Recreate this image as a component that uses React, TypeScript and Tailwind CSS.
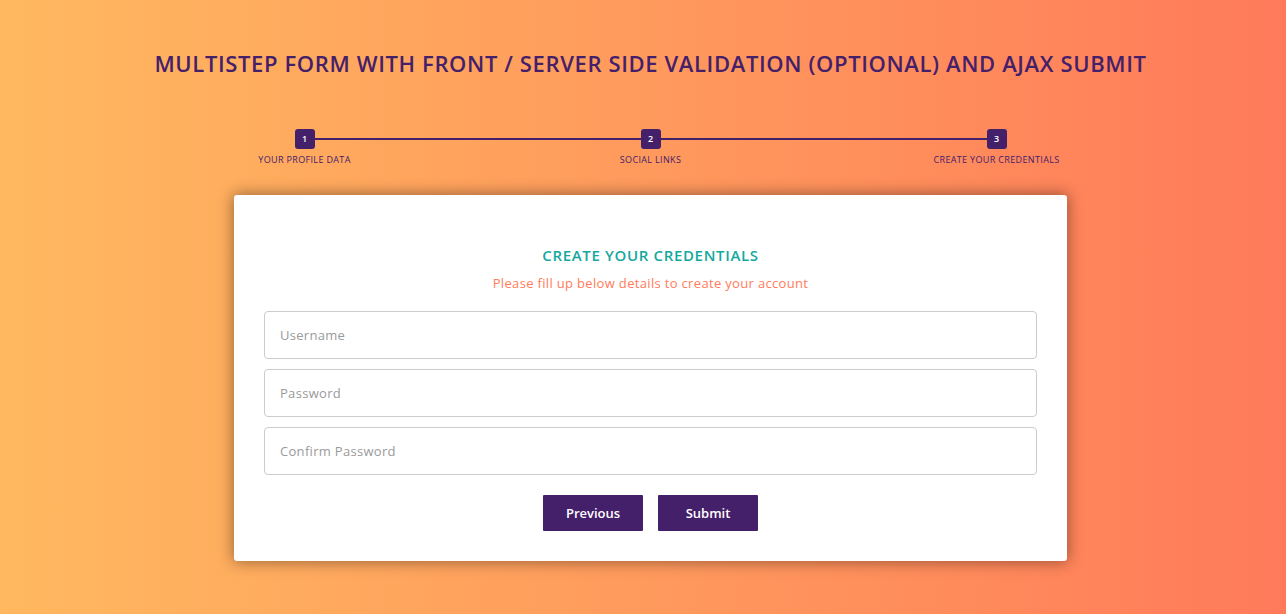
import React from "react";

const font = { fontFamily: '"Open Sans", "Noto Sans", sans-serif' };

function Step({ n, label }: { n: number; label: string }) {
  return (
    <div className="flex w-[346px] flex-col items-center">
      <div className="relative z-10 flex h-[20px] w-[20px] items-center justify-center rounded-[3px] bg-[#45206a] text-[9px] font-semibold text-white">
        {n}
      </div>
      <div className="mt-[5px] text-[9px] leading-[12px] tracking-[0.35px] text-[#45206a]">{label}</div>
    </div>
  );
}

function Field({ placeholder }: { placeholder: string }) {
  return (
    <input
      placeholder={placeholder}
      className="h-[48px] w-full rounded-[4px] border border-[#cccccc] bg-white px-[15px] text-[13px] tracking-[0.3px] text-[#555] outline-none placeholder:text-[#9a9a9a]"
      style={font}
    />
  );
}

export default function App() {
  return (
    <div
      className="flex min-h-[614px] w-full flex-col items-center bg-gradient-to-r from-[#ffb85f] to-[#ff7a5a] pl-[15px]"
      style={font}
    >
      <h1 className="mt-[48px] text-[22px] font-semibold leading-[30px] tracking-[0.63px] text-[#45206a]">
        MULTISTEP FORM WITH FRONT / SERVER SIDE VALIDATION (OPTIONAL) AND AJAX SUBMIT
      </h1>
      <div className="relative mt-[51px] flex">
        <div className="absolute left-[173px] right-[173px] top-[9px] h-[2px] bg-[#45206a]" />
        <Step n={1} label="YOUR PROFILE DATA" />
        <Step n={2} label="SOCIAL LINKS" />
        <Step n={3} label="CREATE YOUR CREDENTIALS" />
      </div>
      <div className="mt-[29px] flex w-[833px] flex-col items-center rounded-[3px] bg-white px-[30px] pb-[30px] pt-[50px] shadow-[0_0_15px_1px_rgba(0,0,0,0.4)]">
        <h2 className="text-[15px] font-semibold leading-[20px] tracking-[0.65px] text-[#13a89e]">CREATE YOUR CREDENTIALS</h2>
        <p className="mt-[9px] text-[13px] leading-[18px] tracking-[0.33px] text-[#ff7b5c]">
          Please fill up below details to create your account
        </p>
        <div className="mt-[19px] flex w-full flex-col gap-[10px]">
          <Field placeholder="Username" />
          <Field placeholder="Password" />
          <Field placeholder="Confirm Password" />
        </div>
        <div className="mt-[20px] flex gap-[15px]">
          <button className="h-[36px] w-[100px] rounded-[1px] bg-[#45206a] pt-[2px] text-[13px] font-semibold text-white">
            Previous
          </button>
          <button className="h-[36px] w-[100px] rounded-[1px] bg-[#45206a] pt-[2px] text-[13px] font-semibold text-white">
            Submit
          </button>
        </div>
      </div>
    </div>
  );
}
